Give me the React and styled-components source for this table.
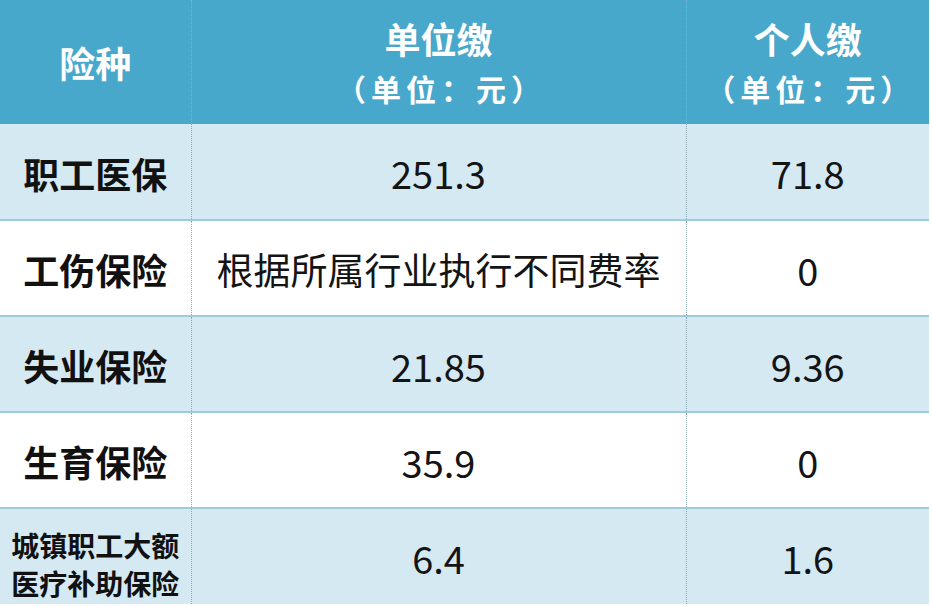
import styled, { createGlobalStyle } from "styled-components";

const GlobalStyle = createGlobalStyle`
  html, body {
    margin: 0;
    padding: 0;
    background: #ffffff;
  }
  body {
    font-family: "Noto Sans CJK SC", "Noto Sans", sans-serif;
  }
`;

const Table = styled.table`
  width: 929px;
  border-collapse: collapse;
  table-layout: fixed;
  text-align: center;
`;

const Col = styled.col`
  width: ${(props) => props.width};
`;

const HeadRow = styled.tr`
  height: 124px;
  background-color: #48a8cb;
`;

const HeadCell = styled.th`
  padding: 0;
  color: #ffffff;
  font-weight: 700;
  vertical-align: middle;
  border-left: ${(props) => (props.first ? "none" : "1px dotted #7fb4c8")};
`;

const HeadTitle = styled.div`
  font-size: 36px;
  line-height: 50px;
  padding-top: ${(props) => (props.single ? "0" : "2px")};
`;

const HeadUnit = styled.div`
  font-size: 30px;
  line-height: 50px;
  letter-spacing: 5px;
  padding-left: 5px;
`;

const Row = styled.tr`
  height: 96px;
  background-color: ${(props) => (props.shaded ? "#d5e9f3" : "#ffffff")};
  border-top: 2px solid #9fcbdb;

  &:first-child {
    border-top: none;
  }
`;

const NameCell = styled.td`
  padding: ${(props) => (props.small ? "14px 0 0" : "2px 0 0")};
  color: #111111;
  font-weight: 700;
  font-size: ${(props) => (props.small ? "28px" : "36px")};
  line-height: ${(props) => (props.small ? "38px" : "44px")};
  vertical-align: middle;
`;

const ValueCell = styled.td`
  padding: 2px 0 0;
  color: #141414;
  font-weight: 400;
  font-size: ${(props) => (props.cjk ? "37px" : "38px")};
  vertical-align: middle;
  border-left: 1px dotted #8fa9b4;
`;

const rows = [
  { name: "职工医保", unit: "251.3", person: "71.8" },
  { name: "工伤保险", unit: "根据所属行业执行不同费率", person: "0", cjk: true },
  { name: "失业保险", unit: "21.85", person: "9.36" },
  { name: "生育保险", unit: "35.9", person: "0" },
  { name: ["城镇职工大额", "医疗补助保险"], unit: "6.4", person: "1.6", small: true },
];

export default function App() {
  return (
    <>
      <GlobalStyle />
      <Table>
        <colgroup>
          <Col width="191px" />
          <Col width="495px" />
          <Col width="243px" />
        </colgroup>
        <thead>
          <HeadRow>
            <HeadCell first>
              <HeadTitle single>险种</HeadTitle>
            </HeadCell>
            <HeadCell>
              <HeadTitle>单位缴</HeadTitle>
              <HeadUnit>（单位：元）</HeadUnit>
            </HeadCell>
            <HeadCell>
              <HeadTitle>个人缴</HeadTitle>
              <HeadUnit>（单位：元）</HeadUnit>
            </HeadCell>
          </HeadRow>
        </thead>
        <tbody>
          {rows.map((r, i) => (
            <Row key={i} shaded={i % 2 === 0}>
              <NameCell small={r.small}>
                {Array.isArray(r.name)
                  ? r.name.map((line) => <div key={line}>{line}</div>)
                  : r.name}
              </NameCell>
              <ValueCell cjk={r.cjk}>{r.unit}</ValueCell>
              <ValueCell>{r.person}</ValueCell>
            </Row>
          ))}
        </tbody>
      </Table>
    </>
  );
}
